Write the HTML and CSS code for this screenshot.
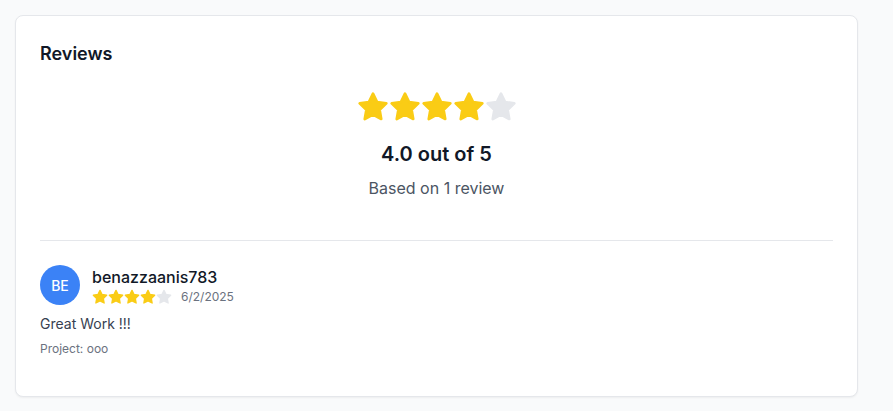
FILE: index.html
```html
<!DOCTYPE html>
<html lang="en">
<head>
<meta charset="utf-8">
<title>Reviews</title>
<link rel="stylesheet" href="styles.css">
</head>
<body>
<svg width="0" height="0" class="defs">
  <defs>
    <polygon id="star" points="12 2 15.09 8.26 22 9.27 17 14.14 18.18 21.02 12 17.77 5.82 21.02 7 14.14 2 9.27 8.91 8.26 12 2"/>
  </defs>
</svg>
<main class="card">
  <h2 class="title">Reviews</h2>
  <section class="summary">
    <div class="stars stars-lg">
      <svg viewBox="0 0 24 24" class="star on"><use href="#star"/></svg>
      <svg viewBox="0 0 24 24" class="star on"><use href="#star"/></svg>
      <svg viewBox="0 0 24 24" class="star on"><use href="#star"/></svg>
      <svg viewBox="0 0 24 24" class="star on"><use href="#star"/></svg>
      <svg viewBox="0 0 24 24" class="star off"><use href="#star"/></svg>
    </div>
    <div class="score">4.0 out of 5</div>
    <div class="based">Based on 1 review</div>
  </section>
  <div class="review">
    <div class="review-head">
      <div class="avatar">BE</div>
      <div class="who">
        <div class="name">benazzaanis783</div>
        <div class="meta">
          <div class="stars stars-sm">
            <svg viewBox="0 0 24 24" class="star on"><use href="#star"/></svg>
            <svg viewBox="0 0 24 24" class="star on"><use href="#star"/></svg>
            <svg viewBox="0 0 24 24" class="star on"><use href="#star"/></svg>
            <svg viewBox="0 0 24 24" class="star on"><use href="#star"/></svg>
            <svg viewBox="0 0 24 24" class="star off"><use href="#star"/></svg>
          </div>
          <span class="date">6/2/2025</span>
        </div>
      </div>
    </div>
    <p class="comment">Great Work !!!</p>
    <p class="project">Project: ooo</p>
  </div>
</main>
</body>
</html>
```
FILE: styles.css
```css
* { box-sizing: border-box; }
html, body { margin: 0; padding: 0; }
body {
  background: #f9fafb;
  font-family: Inter, "Noto Sans", "Liberation Sans", sans-serif;
  color: #111827;
  padding: 15px;
}
.defs { position: absolute; }
.card {
  width: 843px;
  background: #fff;
  border: 1px solid #e5e7eb;
  border-radius: 8px;
  box-shadow: 0 1px 2px rgba(0,0,0,0.05);
  padding: 24px;
}
.title {
  margin: 0;
  font-size: 18px;
  line-height: 28px;
  font-weight: 600;
  color: #111827;
}
.summary {
  margin-top: 23px;
  display: flex;
  flex-direction: column;
  align-items: center;
  padding-bottom: 40px;
  border-bottom: 1px solid #e5e7eb;
}
.stars { display: flex; }
.star { display: block; stroke-width: 2; stroke-linejoin: round; stroke-linecap: round; }
.star.on { fill: #facc15; stroke: #facc15; }
.star.off { fill: #e5e7eb; stroke: #e5e7eb; }
.stars-lg .star { width: 32px; height: 32px; }
.stars-sm .star { width: 16px; height: 16px; }
.score {
  margin-top: 17px;
  font-size: 20px;
  line-height: 28px;
  font-weight: 600;
  color: #111827;
}
.based {
  margin-top: 8px;
  font-size: 16px;
  line-height: 24px;
  color: #4b5563;
}
.review { padding: 24px 0 15px; }
.review-head { display: flex; align-items: center; gap: 12px; }
.avatar {
  width: 40px;
  height: 40px;
  border-radius: 50%;
  background: #3b82f6;
  color: #fff;
  display: flex;
  align-items: center;
  justify-content: center;
  font-size: 14px;
  font-weight: 500;
}
.who { display: flex; flex-direction: column; }
.name { font-size: 16px; line-height: 24px; font-weight: 500; color: #111827; }
.meta { display: flex; align-items: center; gap: 9px; height: 16px; }
.date { font-size: 12px; line-height: 16px; color: #6b7280; }
.comment {
  margin: 9px 0 0;
  font-size: 14px;
  line-height: 20px;
  color: #374151;
}
.project {
  margin: 7px 0 0;
  font-size: 12px;
  line-height: 16px;
  color: #6b7280;
}
```
